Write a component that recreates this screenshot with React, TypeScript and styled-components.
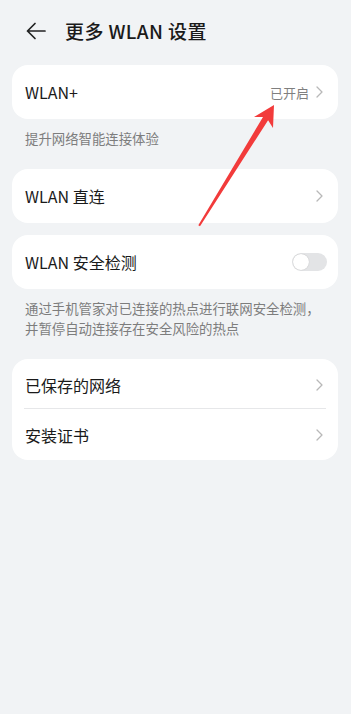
import React from "react";
import styled, { createGlobalStyle } from "styled-components";

const Global = createGlobalStyle`
  html, body { margin: 0; padding: 0; background: #f1f3f5; }
  body { font-family: "Noto Sans CJK SC", "Noto Sans", sans-serif; -webkit-font-smoothing: antialiased; }
  * { box-sizing: border-box; }
`;

const Screen = styled.div`
  position: relative;
  width: 351px;
  min-height: 714px;
  background: #f1f3f5;
  overflow: hidden;
`;

const Header = styled.header`
  height: 65px;
  display: flex;
  align-items: center;
  padding: 0 0 4px 26px;
  gap: 19px;
`;

const Title = styled.h1`
  margin: 0;
  font-size: 19px;
  font-weight: 500;
  color: #1a1a1a;
  letter-spacing: 0.4px;
`;

const Content = styled.main`
  padding: 0 13px 0 12px;
  display: flex;
  flex-direction: column;
`;

const Card = styled.section<{ $gap?: number }>`
  background: #ffffff;
  border-radius: 16px;
  margin-top: ${(p) => p.$gap ?? 0}px;
  display: flex;
  flex-direction: column;
  padding: 0 12px;
`;

const Row = styled.div<{ $h?: number; $divider?: boolean; $offset?: number }>`
  height: ${(p) => p.$h ?? 54}px;
  display: flex;
  align-items: center;
  justify-content: space-between;
  border-bottom: ${(p) => (p.$divider ? "1px solid #e6e7e9" : "none")};
  padding: ${(p) => p.$offset ?? 0}px 3px 0 1px;
`;

const Label = styled.span`
  font-size: 16px;
  color: #1a1a1a;
  font-weight: 400;
`;

const Trail = styled.span`
  display: flex;
  align-items: center;
  gap: 7px;
`;

const Value = styled.span`
  font-size: 13px;
  color: #7f7f7f;
`;

const Note = styled.p`
  margin: 0;
  padding: 9px 12px 0 13px;
  font-size: 13.4px;
  line-height: 20px;
  color: #7d7d7d;
`;

const Toggle = styled.span`
  position: relative;
  width: 35px;
  height: 18px;
  border-radius: 9px;
  background: #e3e4e6;
  margin-right: -4px;
  display: flex;
  align-items: center;
  padding-left: 1px;
`;

const Thumb = styled.span`
  width: 16px;
  height: 16px;
  border-radius: 50%;
  background: #ffffff;
  box-shadow: 0 0 1px rgba(0, 0, 0, 0.25);
`;

const Overlay = styled.svg`
  position: absolute;
  left: 0;
  top: 0;
  pointer-events: none;
`;

const Chevron = () => (
  <svg width="7" height="12" viewBox="0 0 7 12">
    <path d="M1 1 L6 6 L1 11" fill="none" stroke="#b8b8b8" strokeWidth="1.3" strokeLinecap="round" strokeLinejoin="round" />
  </svg>
);

const BackArrow = () => (
  <svg width="20" height="18" viewBox="0 0 20 18">
    <path d="M19 9 H1.5 M9 1.5 L1.5 9 L9 16.5" fill="none" stroke="#222" strokeWidth="1.7" strokeLinecap="round" strokeLinejoin="round" />
  </svg>
);

export default function App() {
  return (
    <Screen>
      <Global />
      <Header>
        <BackArrow />
        <Title>更多 WLAN 设置</Title>
      </Header>
      <Content>
        <Card>
          <Row>
            <Label>WLAN+</Label>
            <Trail>
              <Value>已开启</Value>
              <Chevron />
            </Trail>
          </Row>
        </Card>
        <Note>提升网络智能连接体验</Note>
        <Card $gap={21}>
          <Row>
            <Label>WLAN 直连</Label>
            <Chevron />
          </Row>
        </Card>
        <Card $gap={12}>
          <Row>
            <Label>WLAN 安全检测</Label>
            <Toggle>
              <Thumb />
            </Toggle>
          </Row>
        </Card>
        <Note>
          通过手机管家对已连接的热点进行联网安全检测，
          <br />
          并暂停自动连接存在安全风险的热点
        </Note>
        <Card $gap={21}>
          <Row $h={50} $divider $offset={3}>
            <Label>已保存的网络</Label>
            <Chevron />
          </Row>
          <Row $h={51}>
            <Label>安装证书</Label>
            <Chevron />
          </Row>
        </Card>
      </Content>
      <Overlay width="351" height="714" viewBox="0 0 351 714">
        <polygon
          points="274,105 273,128 268.1,120.2 200,226.2 198.3,225.2 263,117 254,117"
          fill="#f23b3b"
        />
      </Overlay>
    </Screen>
  );
}
